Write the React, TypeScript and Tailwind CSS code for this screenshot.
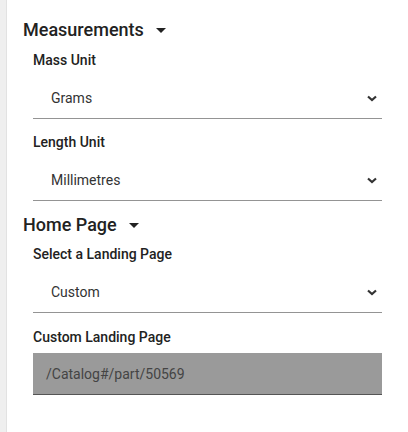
import React from "react";

const Chevron = () => (
  <svg width="10" height="7" viewBox="0 0 10 7" className="shrink-0">
    <polyline points="1,1.5 5,5 9,1.5" fill="none" stroke="#333" strokeWidth="2.2" strokeLinejoin="miter" />
  </svg>
);

const Caret = () => (
  <svg width="10" height="5" viewBox="0 0 10 5" className="shrink-0">
    <polygon points="0,0 10,0 5,5" fill="#222" />
  </svg>
);

const Heading = ({ title, className }: { title: string; className?: string }) => (
  <div className={`flex h-6 items-center gap-[12px] text-[18px] font-medium leading-6 text-[#222] ${className ?? ""}`}>
    <span>{title}</span>
    <Caret />
  </div>
);

const Label = ({ text, className }: { text: string; className?: string }) => (
  <div className={`h-5 text-[14px] font-medium leading-5 text-[#222] ${className ?? ""}`}>{text}</div>
);

const Select = ({ value }: { value: string }) => (
  <div className="mt-2 flex h-[41px] w-[349px] items-center justify-between border-b border-[#949494] pl-[18px] pr-[5px]">
    <span className="text-[14px] leading-5 text-[#333]">{value}</span>
    <Chevron />
  </div>
);

export default function App() {
  return (
    <div className="flex h-[432px] w-[408px] bg-white" style={{ fontFamily: "Roboto, 'Liberation Sans', sans-serif" }}>
      <div className="h-full w-[7px] shrink-0 border-r border-[#e2e2e2] bg-[#efefef]" />
      <div className="flex flex-col pl-[16px] pt-[18px]">
        <Heading title="Measurements" />
        <div className="flex flex-col pl-[10px]">
          <Label text="Mass Unit" className="mt-2" />
          <Select value="Grams" />
          <Label text="Length Unit" className="mt-[13px]" />
          <Select value="Millimetres" />
        </div>
        <Heading title="Home Page" className="mt-3" />
        <div className="flex flex-col pl-[10px]">
          <Label text="Select a Landing Page" className="mt-[7px]" />
          <Select value="Custom" />
          <Label text="Custom Landing Page" className="mt-[14px]" />
          <div className="mt-[6px] flex h-[42px] w-[349px] items-center border-b border-[#555] bg-[#9a9a9a] pl-[13px]">
            <span className="text-[14px] leading-5 text-[#444]">/Catalog#/part/50569</span>
          </div>
        </div>
      </div>
    </div>
  );
}
